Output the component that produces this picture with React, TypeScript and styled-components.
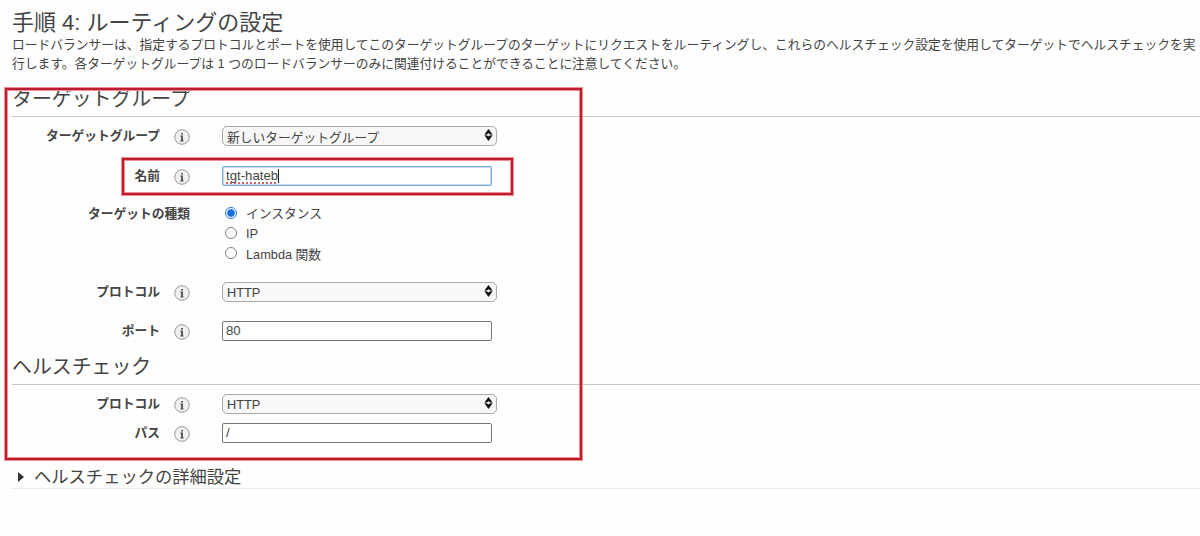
import { createGlobalStyle, styled } from "styled-components";

const App = () => {
  return (
    <Page>
      <GlobalStyle />
      <Title>手順 4: ルーティングの設定</Title>
      <Description>
        ロードバランサーは、指定するプロトコルとポートを使用してこのターゲットグループのターゲットにリクエストをルーティングし、これらのヘルスチェック設定を使用してターゲットでヘルスチェックを実
        <br />
        行します。各ターゲットグループは 1 つのロードバランサーのみに関連付けることができることに注意してください。
      </Description>

      <SectionTitle>ターゲットグループ</SectionTitle>
      <Row $top={9}>
        <Label>ターゲットグループ</Label>
        <Info />
        <Select>
          新しいターゲットグループ
          <SelectArrow />
        </Select>
      </Row>
      <Row $top={20}>
        <Label>名前</Label>
        <Info />
        <Input $focused>
          <Misspelled>tgt-hateb</Misspelled>
          <Caret />
        </Input>
        <NameMark />
      </Row>
      <RadioRow>
        <Label $wide>ターゲットの種類</Label>
        <RadioGroup>
          <RadioItem>
            <Radio $checked />
            インスタンス
          </RadioItem>
          <RadioItem>
            <Radio />
            IP
          </RadioItem>
          <RadioItem>
            <Radio />
            Lambda 関数
          </RadioItem>
        </RadioGroup>
      </RadioRow>
      <Row $top={18}>
        <Label>プロトコル</Label>
        <Info />
        <Select>
          HTTP
          <SelectArrow />
        </Select>
      </Row>
      <Row $top={19}>
        <Label>ポート</Label>
        <Info />
        <Input>80</Input>
      </Row>

      <SectionTitle $second>ヘルスチェック</SectionTitle>
      <Row $top={9}>
        <Label>プロトコル</Label>
        <Info />
        <Select>
          HTTP
          <SelectArrow />
        </Select>
      </Row>
      <Row $top={9}>
        <Label>パス</Label>
        <Info />
        <Input>/</Input>
      </Row>

      <Details>
        <Triangle />
        ヘルスチェックの詳細設定
      </Details>
      <FormMark />
    </Page>
  );
};

const Info = () => (
  <InfoIcon viewBox="0 0 16 16">
    <circle cx="8" cy="8" r="7.3" fill="#f0f0f0" stroke="#999" />
    <path d="M7.1 3.9h1.8v1.7H7.1zM6.3 6.6h2.6v5h.7v.8H6.4v-.8h.7V7.4h-.8z" fill="#4a4a4a" />
  </InfoIcon>
);

const SelectArrow = () => (
  <ArrowIcon viewBox="0 0 9 12">
    <path d="M4.5 0L8.6 5.6H0.4z" fill="#111" />
    <path d="M0.4 6.2H8.6L4.5 12z" fill="#111" />
    <path d="M2.5 5.9L4.5 4.1L6.5 5.9L4.5 7.5z" fill="#e4e4e4" />
  </ArrowIcon>
);

const GlobalStyle = createGlobalStyle`
  * {
    box-sizing: border-box;
  }
  body {
    margin: 0;
    background-color: #fefefe;
    overflow: hidden;
  }
`;

const Page = styled.div`
  position: relative;
  width: 1200px;
  height: 536px;
  padding: 10px 0 0 12px;
  font-family: "Liberation Sans", "Noto Sans CJK JP", sans-serif;
  font-size: 12.76px;
  color: #444;
  white-space: nowrap;
  overflow: hidden;
`;

const Title = styled.h1`
  margin: 0;
  height: 25px;
  font-size: 22px;
  font-weight: 400;
  line-height: 26px;
`;

const Description = styled.p`
  margin: 0;
  line-height: 19px;
`;

const SectionTitle = styled.h2<{ $second?: boolean }>`
  margin: 12px 0 0;
  height: 32px;
  border-bottom: 1px solid #c8c8c8;
  font-size: 19.9px;
  font-weight: 400;
  line-height: 28px;
`;

const Row = styled.div<{ $top: number }>`
  position: relative;
  display: flex;
  align-items: center;
  height: 20px;
  margin-top: ${({ $top }) => $top}px;
`;

const Label = styled.div<{ $wide?: boolean }>`
  width: ${({ $wide }) => ($wide ? "178px" : "148px")};
  font-weight: 700;
  line-height: 20px;
  text-align: right;
`;

const InfoIcon = styled.svg`
  width: 16px;
  height: 16px;
  margin: 2.6px 32px 0 14px;
`;

const Select = styled.div`
  display: flex;
  align-items: center;
  justify-content: space-between;
  width: 275px;
  height: 20px;
  padding: 0 3px 0 4px;
  border: 1px solid #a9a9a9;
  border-radius: 5px;
  background-color: #f7f7f7;
`;

const ArrowIcon = styled.svg`
  width: 9px;
  height: 12px;
  margin-bottom: 2px;
`;

const Input = styled.div<{ $focused?: boolean }>`
  display: flex;
  align-items: center;
  width: 270px;
  height: 20px;
  padding-left: 3px;
  border: 1px solid ${({ $focused }) => ($focused ? "#7ba7d4" : "#777")};
  border-radius: 2px;
  background-color: #fff;
  font-size: 13.2px;
  line-height: 16px;
  box-shadow: ${({ $focused }) => ($focused ? "inset 0 0 0 1px #c5dcf2" : "none")};
`;

const Misspelled = styled.span`
  text-decoration: underline dotted #d8606a 1.5px;
  text-decoration-skip-ink: none;
  text-underline-offset: 2px;
`;

const Caret = styled.span`
  width: 1px;
  height: 14px;
  background-color: #222;
`;

const RadioRow = styled.div`
  display: flex;
  margin-top: 18px;
  height: 60px;
`;

const RadioGroup = styled.div`
  margin-left: 35px;
`;

const RadioItem = styled.div`
  display: flex;
  align-items: center;
  height: 20.3px;
  line-height: 20px;
`;

const Radio = styled.span<{ $checked?: boolean }>`
  width: 12px;
  height: 12px;
  margin: 0 9px 3px 0;
  border: 1px solid ${({ $checked }) => ($checked ? "#2374e1" : "#808080")};
  border-radius: 50%;
  background: ${({ $checked }) =>
    $checked ? "radial-gradient(circle, #1a6fe0 3.4px, #fff 4.2px)" : "#fff"};
`;

const Details = styled.div`
  display: flex;
  align-items: center;
  height: 23px;
  margin-top: 23px;
  border-bottom: 1px solid #ececec;
  font-size: 17.3px;
  line-height: 22px;
`;

const Triangle = styled.span`
  margin: 0 10px 0 6px;
  border-top: 5px solid transparent;
  border-bottom: 5px solid transparent;
  border-left: 6px solid #333;
`;

const Mark = styled.div`
  position: absolute;
  border: 2px solid #b91f2e;
  box-shadow: 0 0 0 1px #f58d95, inset 0 0 0 1px #f58d95;
  pointer-events: none;
`;

const NameMark = styled(Mark)`
  left: 110px;
  top: -8px;
  width: 391px;
  height: 37px;
`;

const FormMark = styled(Mark)`
  left: 5px;
  top: 88px;
  width: 577px;
  height: 372px;
`;

export default App;
